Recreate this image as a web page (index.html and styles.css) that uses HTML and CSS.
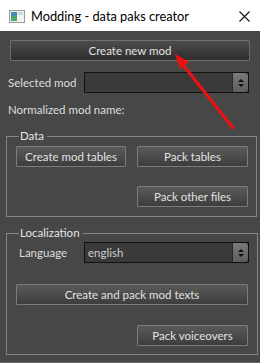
FILE: index.html
```html
<!DOCTYPE html>
<html lang="en">
<head>
  <meta charset="UTF-8" />
  <title>Modding - data paks creator</title>
  <link rel="stylesheet" href="styles.css">
</head>
<body>
  <div class="window">
    <div class="titlebar">
      <svg class="app-icon" width="16" height="13" viewBox="0 0 16 13">
        <rect x="0.5" y="0.5" width="15" height="12" fill="#f2f2f2" stroke="#9a9a9a"/>
        <rect x="2" y="2" width="6" height="9" fill="#3f8fb0"/>
        <rect x="2" y="6" width="6" height="5" fill="#4aa86a"/>
        <rect x="9" y="2" width="5" height="3" fill="#c9d6df"/>
      </svg>
      <span class="title">Modding - data paks creator</span>
      <svg class="close" width="11" height="11" viewBox="0 0 11 11">
        <path d="M0.5 0.5 L10.5 10.5 M10.5 0.5 L0.5 10.5" stroke="#111" stroke-width="1.1"/>
      </svg>
    </div>
    <div class="content">
      <button class="btn main-btn">Create new mod</button>
      <div class="row mod-row">
        <span class="label">Selected mod</span>
        <div class="combo">
          <span class="combo-text"></span>
          <span class="combo-arrow"><i class="up"></i><i class="down"></i></span>
        </div>
      </div>
      <div class="normalized">Normalized mod name:</div>

      <fieldset class="group data-group">
        <legend>Data</legend>
        <div class="btn-grid">
          <button class="btn">Create mod tables</button>
          <button class="btn">Pack tables</button>
          <span></span>
          <button class="btn">Pack other files</button>
        </div>
      </fieldset>

      <fieldset class="group loc-group">
        <legend>Localization</legend>
        <div class="row lang-row">
          <span class="label">Language</span>
          <div class="combo">
            <span class="combo-text">english</span>
            <span class="combo-arrow"><i class="up"></i><i class="down"></i></span>
          </div>
        </div>
        <button class="btn wide-btn">Create and pack mod texts</button>
        <div class="btn-grid single">
          <span></span>
          <button class="btn">Pack voiceovers</button>
        </div>
      </fieldset>
    </div>
    <svg class="pointer" width="260" height="363" viewBox="0 0 260 363">
      <line x1="233" y1="128" x2="180" y2="61" stroke="#f01010" stroke-width="3" stroke-linecap="round"/>
      <polygon points="175,54 189,62 180,69" fill="#f01010"/>
    </svg>
  </div>
</body>
</html>
```

FILE: styles.css
```css
html, body {
  margin: 0;
  padding: 0;
}
body {
  font-family: Lato, 'Liberation Sans', sans-serif;
  font-size: 11.5px;
  background: #4a4a4a;
}
.window {
  position: relative;
  width: 260px;
  height: 363px;
  background: #474747;
  overflow: hidden;
  border-bottom: 1px solid #6a6a6a;
  box-sizing: border-box;
}
.titlebar {
  height: 31px;
  background: #ffffff;
  display: flex;
  align-items: center;
  padding: 0 10px 0 9px;
  box-sizing: border-box;
}
.app-icon {
  margin-top: 1px;
}
.title {
  margin-left: 6px;
  color: #000;
  font-size: 12.8px;
  flex: 1;
}
.close {
  margin-top: 2px;
}
.content {
  display: flex;
  flex-direction: column;
  padding: 9px 3px 0 6px;
  color: #dedede;
}
.btn {
  font-family: inherit;
  font-size: 11.5px;
  color: #e2e2e2;
  height: 21px;
  padding: 0;
  background: linear-gradient(to bottom, #5a5a5a, #3d3d3d);
  border: 1px solid #7b7b7b;
  border-radius: 1px;
  box-sizing: border-box;
}
.main-btn {
  margin: 0 7px 0 4px;
  background: linear-gradient(to bottom, #4c4c4c, #2e2e2e);
  border-color: #6e6e6e;
}
.row {
  display: flex;
  align-items: center;
  height: 21px;
}
.mod-row {
  margin-top: 11px;
}
.label {
  width: 76px;
  padding-left: 2px;
}
.combo {
  width: 165px;
  height: 21px;
  box-sizing: border-box;
  border: 1px solid #111;
  background: #3a3a3a;
  display: flex;
  align-items: center;
  justify-content: space-between;
}
.combo-text {
  padding-left: 3px;
  color: #d0d0d0;
}
.combo-arrow {
  width: 16px;
  height: 19px;
  box-sizing: border-box;
  border-left: 1px solid #2a2a2a;
  border-radius: 0 4px 4px 0;
  background: linear-gradient(to bottom, #7a7a7a, #5e5e5e);
  display: flex;
  flex-direction: column;
  align-items: center;
  justify-content: center;
  gap: 2px;
}
.combo-arrow i {
  width: 0;
  height: 0;
  border-left: 3px solid transparent;
  border-right: 3px solid transparent;
}
.combo-arrow .up {
  border-bottom: 3px solid #111;
}
.combo-arrow .down {
  border-top: 3px solid #111;
}
.normalized {
  margin-top: 9px;
  padding-left: 2px;
  height: 16px;
  line-height: 16px;
}
.group {
  margin: 0;
  width: 251px;
  box-sizing: border-box;
  border: 1px solid #858585;
  padding: 0 8px 0 9px;
}
.group legend {
  padding: 0 3px 0 1px;
  margin-left: 3px;
  color: #e4e4e4;
  line-height: 14px;
}
.data-group {
  margin-top: 11px;
  height: 88px;
}
.btn-grid {
  display: grid;
  grid-template-columns: 110px 111px;
  column-gap: 11px;
  row-gap: 19px;
  margin-top: 3px;
}
.loc-group {
  margin-top: 9px;
  height: 129px;
}
.lang-row {
  margin-top: 2px;
}
.lang-row .label {
  width: 65px;
  padding-left: 3px;
}
.wide-btn {
  margin-top: 21px;
  width: 232px;
}
.btn-grid.single {
  margin-top: 20px;
}
.pointer {
  position: absolute;
  left: 0;
  top: 0;
  pointer-events: none;
}
```
